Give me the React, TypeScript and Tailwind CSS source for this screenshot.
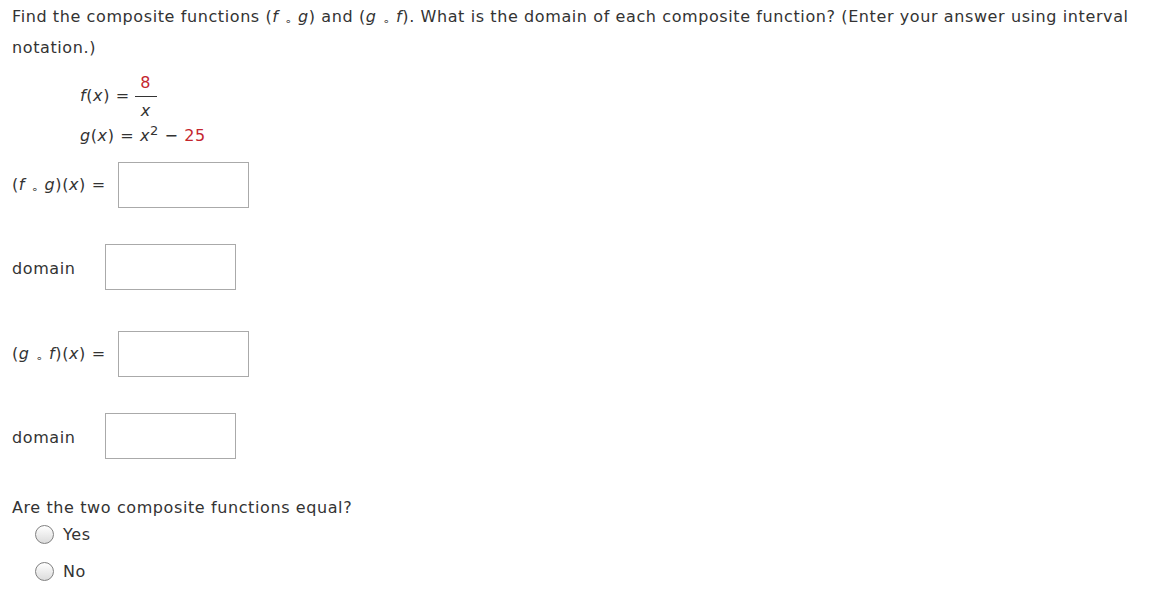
import React from "react";

const Circ = () => <span className="mx-[6px] align-[-3px] leading-none text-[11px]">∘</span>;

const Comp = ({ a, b }: { a: string; b: string }) => (
  <span className="w-[106px] shrink-0">
    (<i>{a}</i>
    <Circ />
    <i>{b}</i>)(<i>x</i>) =
  </span>
);

const Box = () => <div className="h-[46px] w-[131px] border border-[#aaaaaa] bg-white" />;

const Radio = ({ label }: { label: string }) => (
  <div className="flex items-center h-[37px] pl-[23px]">
    <span className="w-[19px] h-[19px] rounded-full border border-[#808080] bg-gradient-to-b from-[#ffffff] to-[#dcdcdc]" />
    <span className="ml-[9px]">{label}</span>
  </div>
);

export default function App() {
  return (
    <div
      className="w-[1156px] h-[607px] bg-white text-[#333] text-[16px] tracking-[0.6px] px-[12px] pt-[1px]"
      style={{ fontFamily: "Verdana, 'DejaVu Sans', sans-serif" }}
    >
      <p className="leading-[31px] w-[1130px]">
        Find the composite functions (<i>f</i>
        <Circ />
        <i>g</i>) and (<i>g</i>
        <Circ />
        <i>f</i>). What is the domain of each composite function? (Enter your answer using interval
        <br />
        notation.)
      </p>

      <div className="ml-[68px] mt-[11px]">
        <div className="flex items-center h-[44px]">
          <span>
            <i>f</i>(<i>x</i>) =
          </span>
          <span className="ml-[5px] inline-flex flex-col items-center">
            <span className="text-[#c4262e] leading-[20px]">8</span>
            <span className="w-[22px] h-[1px] bg-[#333] mt-[3px] mb-[5px]" />
            <span className="leading-[18px]">
              <i>x</i>
            </span>
          </span>
        </div>
        <div className="h-[36px] flex items-center">
          <span>
            <i>g</i>(<i>x</i>) = <i>x</i>
            <sup className="text-[13px]">2</sup> − <span className="text-[#c4262e]">25</span>
          </span>
        </div>
      </div>

      <div className="flex items-center mt-[8px]">
        <Comp a="f" b="g" />
        <Box />
      </div>
      <div className="flex items-center mt-[36px]">
        <span className="w-[93px] pt-[4px]">domain</span>
        <Box />
      </div>

      <div className="flex items-center mt-[41px]">
        <Comp a="g" b="f" />
        <Box />
      </div>
      <div className="flex items-center mt-[36px]">
        <span className="w-[93px] pt-[4px]">domain</span>
        <Box />
      </div>

      <p className="mt-[41px] leading-[16px]">Are the two composite functions equal?</p>
      <Radio label="Yes" />
      <Radio label="No" />
    </div>
  );
}
